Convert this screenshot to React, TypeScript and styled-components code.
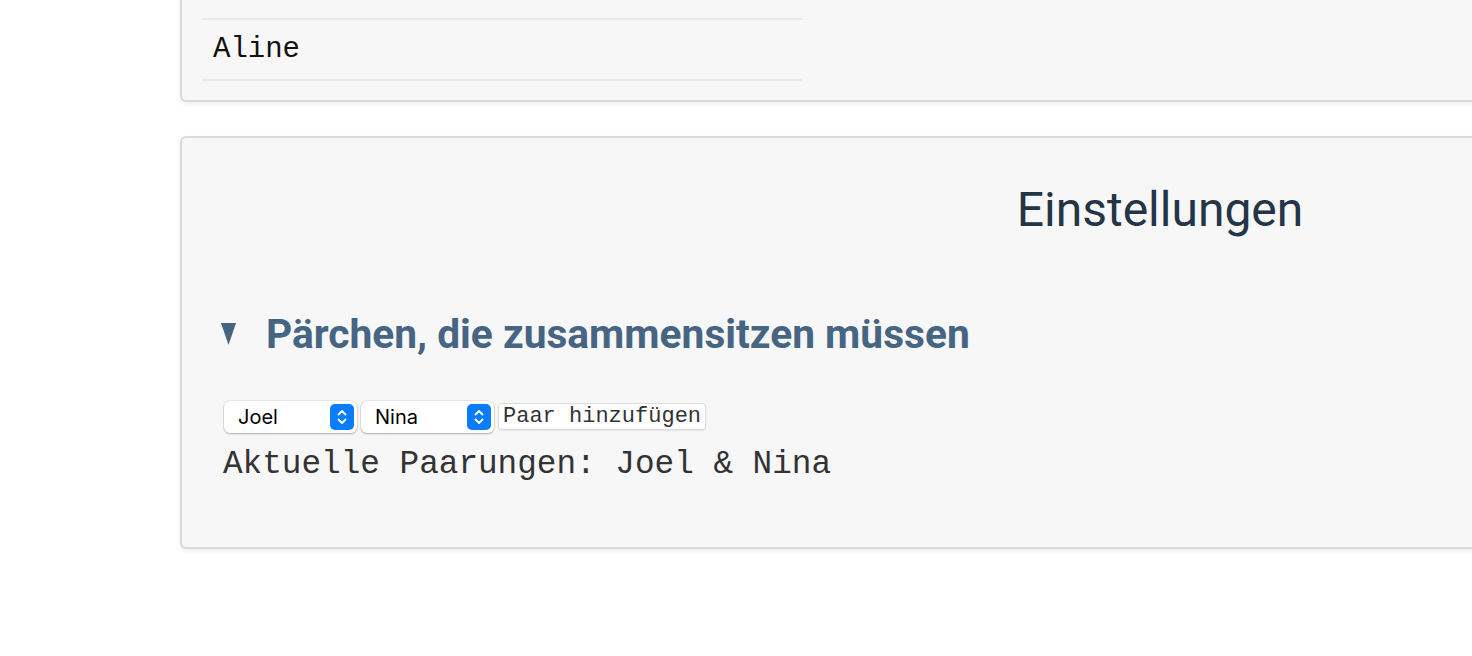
import React, { useState } from 'react';
import styled, { createGlobalStyle } from 'styled-components';

const GlobalStyle = createGlobalStyle`
  html, body {
    margin: 0;
    padding: 0;
    background: #ffffff;
    overflow: hidden;
  }
  body {
    font-family: 'Liberation Mono', monospace;
    color: #333333;
  }
`;

const people = ['Aline', 'Joel', 'Nina'];

const Stepper = () => (
  <svg width="24" height="26" viewBox="0 0 24 26">
    <rect x="0" y="0" width="24" height="26" rx="5" fill="#0a7cff" />
    <path d="M8.5 10.5 L12 7 L15.5 10.5" fill="none" stroke="#fff" strokeWidth="1.8" strokeLinecap="round" strokeLinejoin="round" />
    <path d="M8.5 15.5 L12 19 L15.5 15.5" fill="none" stroke="#fff" strokeWidth="1.8" strokeLinecap="round" strokeLinejoin="round" />
  </svg>
);

const Triangle = () => (
  <svg width="15" height="22" viewBox="0 0 15 22">
    <polygon points="0,0 15,0 7.5,22" fill="#456583" />
  </svg>
);

const PairSelect = ({ value, onChange }: { value: string; onChange: (v: string) => void }) => (
  <SelectWrap>
    <Select value={value} onChange={(e) => onChange(e.target.value)}>
      {people.map((p) => (
        <option key={p} value={p}>
          {p}
        </option>
      ))}
    </Select>
    <StepperBox>
      <Stepper />
    </StepperBox>
  </SelectWrap>
);

const App = () => {
  const [first, setFirst] = useState('Joel');
  const [second, setSecond] = useState('Nina');

  return (
    <Page>
      <GlobalStyle />
      <NameCard>
        <NameList>
          <NameRow>Aline</NameRow>
        </NameList>
      </NameCard>

      <SettingsCard>
        <Title>Einstellungen</Title>
        <Section>
          <SectionHead>
            <Triangle />
            <SectionTitle>Pärchen, die zusammensitzen müssen</SectionTitle>
          </SectionHead>
          <Controls>
            <PairSelect value={first} onChange={setFirst} />
            <PairSelect value={second} onChange={setSecond} />
            <AddButton>Paar hinzufügen</AddButton>
          </Controls>
          <Current>Aktuelle Paarungen: Joel &amp; Nina</Current>
        </Section>
      </SettingsCard>
    </Page>
  );
};

export default App;

const Page = styled.div`
  display: flex;
  flex-direction: column;
  align-items: flex-start;
  padding-left: 180px;
  height: 656px;
`;

const Card = styled.div`
  box-sizing: border-box;
  width: 1960px;
  flex-shrink: 0;
  background: #f7f7f7;
  border: 2px solid #d9d9d9;
  border-radius: 6px;
  box-shadow: 0 2px 5px rgba(0, 0, 0, 0.07);
`;

const NameCard = styled(Card)`
  margin-top: -40px;
  padding: 56px 20px 19px;
`;

const NameList = styled.ul`
  list-style: none;
  margin: 0;
  padding: 0;
  width: 600px;
`;

const NameRow = styled.li`
  box-sizing: border-box;
  height: 63px;
  display: flex;
  align-items: center;
  padding-left: 11px;
  border-top: 2px solid #e8e8e8;
  border-bottom: 2px solid #e8e8e8;
  font-family: 'Liberation Mono', monospace;
  font-size: 29px;
  color: #111111;
`;

const SettingsCard = styled(Card)`
  margin-top: 34px;
  padding: 43px 41px 63px;
`;

const Title = styled.h2`
  margin: 0;
  text-align: center;
  font-family: Roboto, 'Liberation Sans', sans-serif;
  font-weight: 400;
  font-size: 48px;
  line-height: 1.2;
  color: #233547;
`;

const Section = styled.div`
  display: flex;
  flex-direction: column;
  margin-top: 71px;
`;

const SectionHead = styled.div`
  display: flex;
  align-items: center;
  gap: 30px;
  margin-left: -2px;
`;

const SectionTitle = styled.h3`
  margin: 0;
  font-family: Roboto, 'Liberation Sans', sans-serif;
  font-weight: 700;
  font-size: 40.7px;
  line-height: 48px;
  color: #456583;
`;

const Controls = styled.div`
  display: flex;
  align-items: center;
  gap: 4px;
  margin-top: 43px;
  margin-left: 1px;
`;

const SelectWrap = styled.div`
  position: relative;
  width: 133px;
  height: 32px;
`;

const Select = styled.select`
  appearance: none;
  -webkit-appearance: none;
  box-sizing: border-box;
  width: 100%;
  height: 100%;
  padding: 0 30px 0 14px;
  border: none;
  border-radius: 6px;
  background: #ffffff;
  box-shadow: 0 0 0 0.5px rgba(0, 0, 0, 0.12), 0 1px 2px rgba(0, 0, 0, 0.25);
  font-family: Inter, 'Liberation Sans', sans-serif;
  font-size: 20px;
  color: #000000;
  outline: none;
`;

const StepperBox = styled.span`
  position: absolute;
  right: 3px;
  top: 3px;
  display: flex;
  pointer-events: none;
`;

const AddButton = styled.button`
  box-sizing: border-box;
  height: 27px;
  padding: 0 4px;
  background: #ffffff;
  border: 1px solid #dcdcdc;
  border-radius: 4px;
  box-shadow: 0 1px 1px rgba(0, 0, 0, 0.08);
  font-family: 'Liberation Mono', monospace;
  font-size: 22px;
  line-height: 1;
  color: #333333;
`;

const Current = styled.p`
  margin: 12px 0 0;
  font-family: 'Liberation Mono', monospace;
  font-size: 32.7px;
  line-height: 1.2;
  color: #333333;
`;
